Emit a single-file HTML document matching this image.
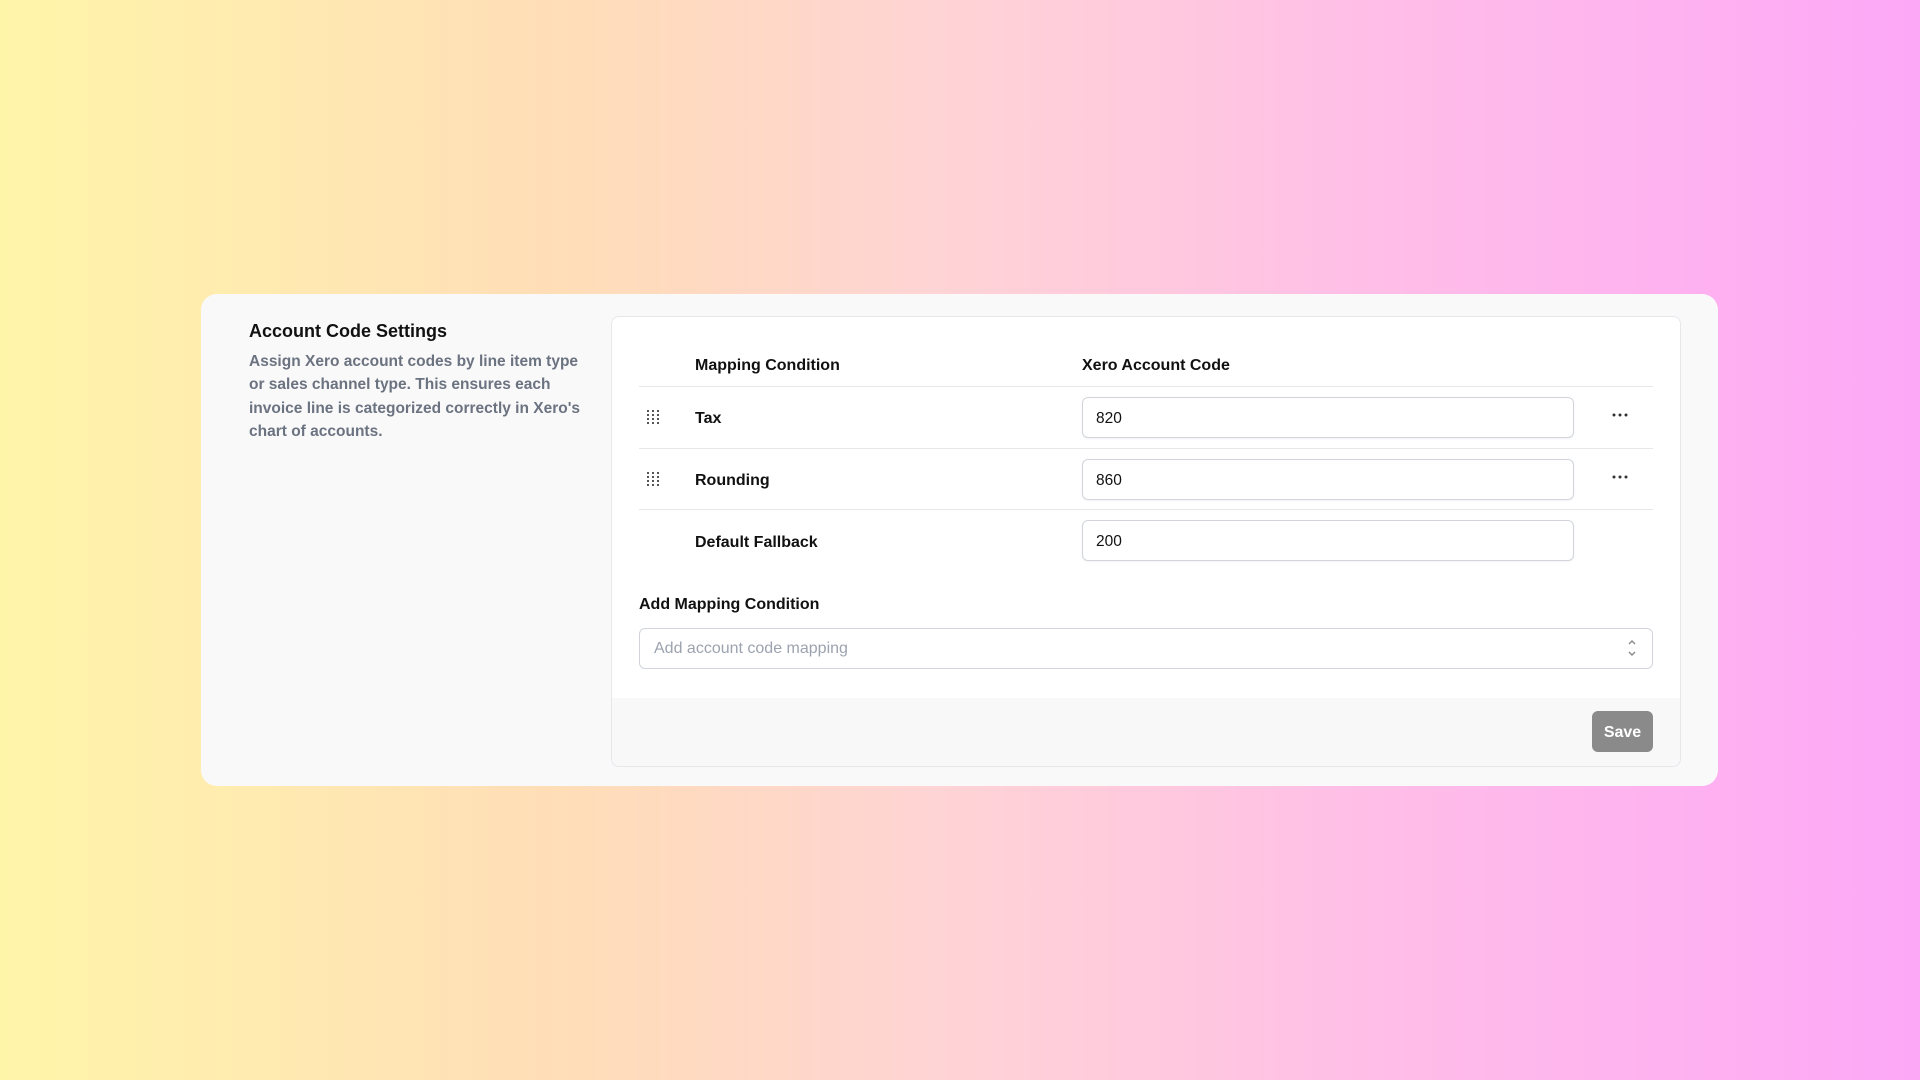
<!DOCTYPE html>
<html><head><meta charset="utf-8"><style>
*{box-sizing:border-box;margin:0;padding:0}
body{width:1920px;height:1080px;overflow:hidden;font-family:"Liberation Sans",sans-serif;background:linear-gradient(90deg,#fff5a9 0%,#ffddb8 30%,#ffd3d6 50%,#ffbfe6 70%,#fda8f7 100%);position:relative;color:#111827}
.card{position:absolute;left:201px;top:294px;width:1517px;height:492px;background:#f9f9fa;border-radius:16px}
.title{position:absolute;left:249px;top:321px;font-size:18px;font-weight:600;color:#111}
.desc{position:absolute;left:249px;top:350px;width:335px;font-size:15.5px;line-height:23.3px;color:#6b7280;font-weight:600}
.panel{position:absolute;left:611px;top:316px;width:1070px;height:451px;background:#fff;border:1px solid #e5e7eb;border-radius:8px;overflow:hidden}
.footer{position:absolute;left:0;right:0;top:381px;bottom:0;background:#f8f8f8}
.t{position:absolute;font-size:16px;font-weight:600;color:#111}
.line{position:absolute;left:639px;width:1014px;height:1px;background:#e5e7eb}
.inp{position:absolute;left:1082px;width:492px;height:41px;border:1px solid #d1d5db;border-radius:6px;background:#fff;font-size:15.5px;padding-left:13px;line-height:41px;color:#111;box-shadow:0 1px 2px rgba(0,0,0,.05)}
.grip{position:absolute;left:647px;width:13px;height:14px}
.sel{position:absolute;left:639px;top:628px;width:1014px;height:41px;border:1px solid #d1d5db;border-radius:6px;background:#fff;font-size:16px;color:#9ca3af;padding-left:14px;line-height:40px}
.save{position:absolute;left:1592px;top:711px;width:61px;height:41px;background:#8a8a8a;border-radius:6px;color:#fff;font-weight:600;font-size:16px;text-align:center;line-height:43px}
</style></head><body>
<div class="card"></div>
<div class="title">Account Code Settings</div>
<div class="desc">Assign Xero account codes by line item type or sales channel type. This ensures each invoice line is categorized correctly in Xero's chart of accounts.</div>
<div class="panel"><div class="footer"></div></div>
<div class="t" style="left:695px;top:357px">Mapping Condition</div>
<div class="t" style="left:1082px;top:357px">Xero Account Code</div>
<div class="line" style="top:386px"></div>
<div class="line" style="top:448px"></div>
<div class="line" style="top:509px"></div>
<svg class="grip" style="top:410px" viewBox="0 0 13 14" fill="#555"><rect x="0" y="0" width="2" height="2"/><rect x="5" y="0" width="2" height="2"/><rect x="10" y="0" width="2" height="2"/><rect x="0" y="4" width="2" height="2"/><rect x="5" y="4" width="2" height="2"/><rect x="10" y="4" width="2" height="2"/><rect x="0" y="8" width="2" height="2"/><rect x="5" y="8" width="2" height="2"/><rect x="10" y="8" width="2" height="2"/><rect x="0" y="12" width="2" height="2"/><rect x="5" y="12" width="2" height="2"/><rect x="10" y="12" width="2" height="2"/></svg>
<svg class="grip" style="top:472px" viewBox="0 0 13 14" fill="#555"><rect x="0" y="0" width="2" height="2"/><rect x="5" y="0" width="2" height="2"/><rect x="10" y="0" width="2" height="2"/><rect x="0" y="4" width="2" height="2"/><rect x="5" y="4" width="2" height="2"/><rect x="10" y="4" width="2" height="2"/><rect x="0" y="8" width="2" height="2"/><rect x="5" y="8" width="2" height="2"/><rect x="10" y="8" width="2" height="2"/><rect x="0" y="12" width="2" height="2"/><rect x="5" y="12" width="2" height="2"/><rect x="10" y="12" width="2" height="2"/></svg>
<div class="t" style="left:695px;top:410px">Tax</div>
<div class="t" style="left:695px;top:472px">Rounding</div>
<div class="t" style="left:695px;top:534px">Default Fallback</div>
<div class="inp" style="top:397px">820</div>
<div class="inp" style="top:459px">860</div>
<div class="inp" style="top:520px">200</div>
<svg style="position:absolute;left:1612px;top:413px" width="16" height="4"><circle cx="2" cy="2" r="1.5" fill="#333"/><circle cx="8" cy="2" r="1.5" fill="#333"/><circle cx="14" cy="2" r="1.5" fill="#333"/></svg>
<svg style="position:absolute;left:1612px;top:475px" width="16" height="4"><circle cx="2" cy="2" r="1.5" fill="#333"/><circle cx="8" cy="2" r="1.5" fill="#333"/><circle cx="14" cy="2" r="1.5" fill="#333"/></svg>
<div class="t" style="left:639px;top:596px">Add Mapping Condition</div>
<div class="sel">Add account code mapping</div>
<svg style="position:absolute;left:1626px;top:638px" width="12" height="20" viewBox="0 0 12 20" fill="none" stroke="#888" stroke-width="1.4"><path d="M3 6l3-3 3 3M3 14l3 3 3-3"/></svg>
<div class="save">Save</div>
</body></html>
